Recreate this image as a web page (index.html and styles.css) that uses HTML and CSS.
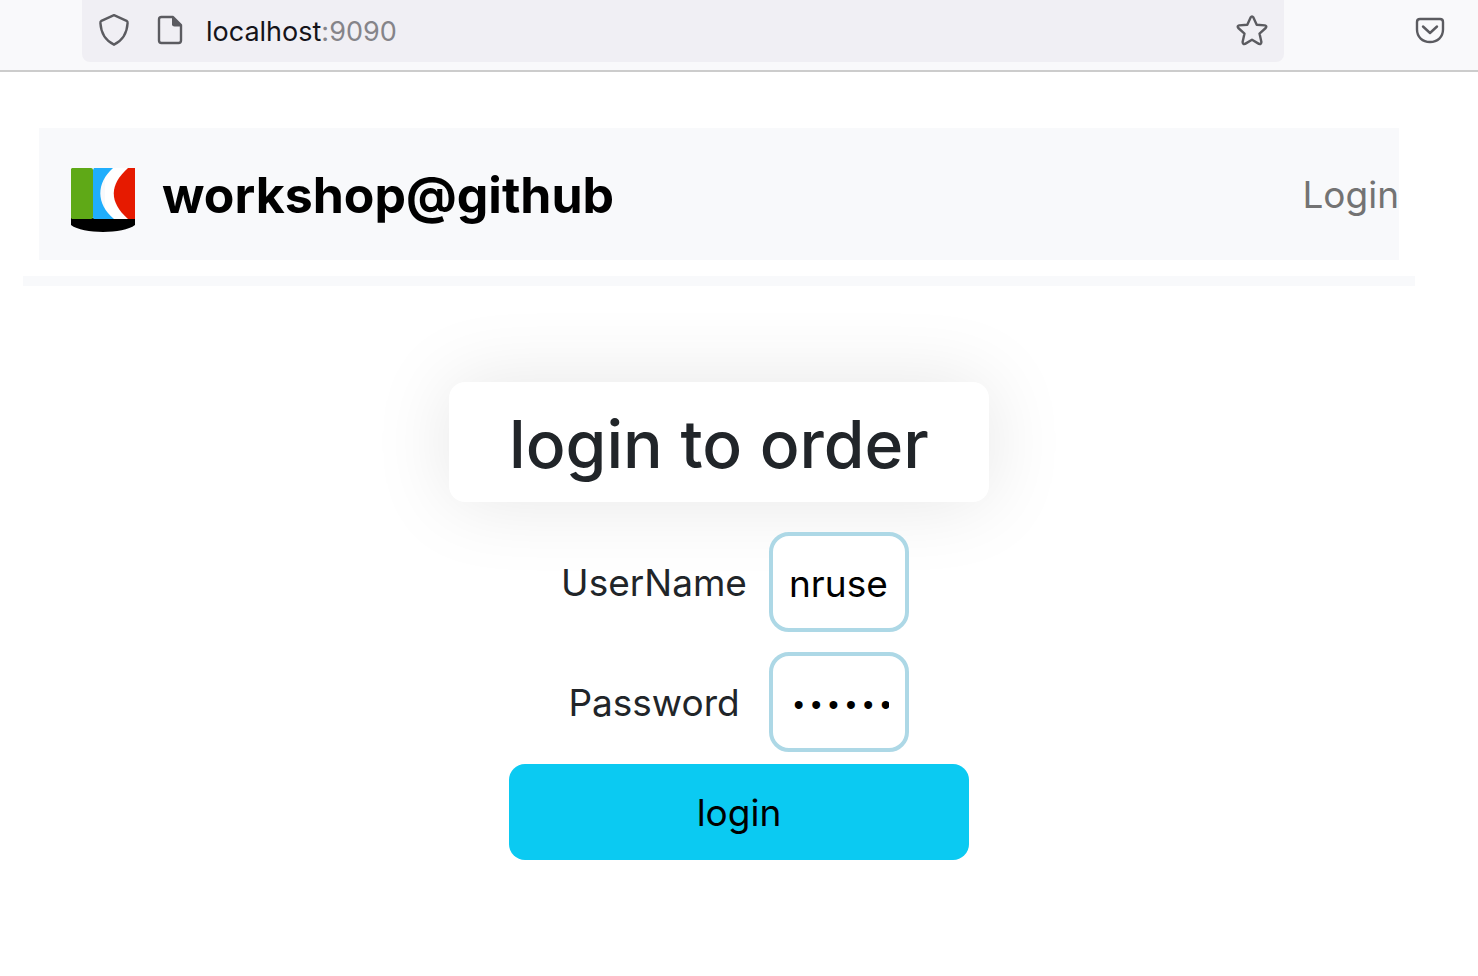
FILE: index.html
```html
<!DOCTYPE html>
<html lang="en">
<head>
<meta charset="utf-8">
<title>workshop@github</title>
<link rel="stylesheet" href="styles.css">
</head>
<body>
<div class="toolbar">
  <div class="address">
    <svg class="icon" viewBox="0 0 32 32" aria-hidden="true"><path d="M16 .200 28.600 5.800Q29.800 6.500 29.600 8C29 18.500 24.500 25.500 16 29.700C7.500 25.500 3 18.500 2.400 8Q2.200 6.500 3.400 5.800Z"/></svg>
    <svg class="icon" viewBox="0 0 32 32" aria-hidden="true"><path d="M7.500 2H19l8 8V25.500Q27 28 24.500 28H7.500Q5 28 5 25.500V4.500Q5 2 7.500 2Z"/><path class="solid" d="M18 2 28 11V11.500H20.500Q18 11.500 18 9.500Z"/></svg>
    <label class="url"><input class="url-input" type="text" aria-label="Address" value=""><span class="url-text">localhost<span class="port">:9090</span></span></label>
    <button class="icon-button" type="button" aria-label="Bookmark this page"><svg class="icon" viewBox="0 0 32 32"><path d="M14.600 2.500Q16 .300 17.400 2.500L20.700 9.700 28.900 10.400Q31.300 11 29.700 13L23.500 18.600 25.400 27Q25.300 29.500 22.900 28.900L16 24.800 9.100 28.900Q6.700 29.500 6.600 27L8.500 18.600 2.300 13Q.700 11 3.100 10.400L11.300 9.700Z"/></svg></button>
  </div>
  <button class="icon-button pocket" type="button" aria-label="Save to Pocket"><svg class="icon" viewBox="0 0 32 32"><path d="M6 5H26Q29 5 29 8V15.500C29 23 23.500 28 16 28S3 23 3 15.500V8Q3 5 6 5ZM9 12.500 16 19 23 12.500"/></svg></button>
</div>
<div class="page">
  <header class="site-header">
    <a class="brand" href="#">
      <svg class="logo" viewBox="0 0 64 64" aria-hidden="true">
        <path fill="#000" d="M0 50H64V57C52 66.300 12 66.300 0 57Z"/>
        <path fill="#fff" d="M34 0H64V51H34Z"/>
        <path fill="#5fa917" d="M1 0H20Q22 0 22 2V49Q22 51 20 51H1L0 50V1Z"/>
        <path fill="#20aefc" d="M23 0H42C25 15 25 36 43 51H23Q22 51 22 49V2Z"/>
        <path fill="#e61a00" d="M57 0H64V51H57C38 34 38 17 57 0Z"/>
      </svg>
      <span>workshop@github</span>
    </a>
    <a class="nav-link" href="#">Login</a>
  </header>
  <div class="divider"></div>
  <main class="login">
    <h1 class="title">login to order</h1>
    <form class="form">
      <div class="fields">
        <label class="field-label" for="user">UserName</label>
        <input class="field" id="user" type="text" value="nruse">
        <label class="field-label" for="pass">Password</label>
        <input class="field password" id="pass" type="password" value="secret99">
      </div>
      <button class="submit" type="button">login</button>
    </form>
  </main>
</div>
</body>
</html>
```
FILE: styles.css
```css
* { box-sizing: border-box; }
body { margin: 0; background: #fff; color: #212529; font-family: Inter, "Liberation Sans", sans-serif; font-size: 37px; line-height: 60px; }
a { text-decoration: none; }
button, input { font: inherit; }
.toolbar { display: flex; align-items: center; height: 72px; padding: 0 32px 10px 82px; background: #f9f9fb; border-bottom: 2px solid #ccc; }
.address { display: flex; flex: 1; align-items: center; gap: 24px; height: 62px; margin-top: 2px; padding: 0 16px; background: #f0eff4; border-radius: 0 0 8px 8px; }
.icon { display: block; width: 32px; height: 32px; overflow: visible; fill: none; stroke: #5b5b60; stroke-width: 2.4; stroke-linejoin: round; stroke-linecap: round; }
.solid { fill: #5b5b60; stroke: none; }
.icon-button { padding: 0; border: 0; background: none; }
.pocket { margin-left: 130px; }
.url { position: relative; flex: 1; margin-left: -4px; padding-top: 2px; font-size: 27px; line-height: 40px; color: #15141a; }
.url-input { position: absolute; inset: 0; width: 100%; border: 0; background: none; outline: 0; }
.url-text { position: relative; pointer-events: none; }
.port { color: #858489; }
.page { padding: 56px 63px 40px 23px; }
.site-header { display: flex; align-items: center; justify-content: space-between; height: 132px; margin: 0 16px 16px; padding: 2px 0 0 32px; background: #f8f9fb; }
.brand { display: flex; align-items: center; gap: 27px; color: #000; font-size: 50px; font-weight: 700; }
.logo { width: 64px; height: 64px; margin-top: 10px; }
.nav-link { color: #737373; }
.divider { height: 10px; background: #f8f9fb; }
.login { width: 540px; max-width: 100%; margin: 96px auto 0; }
.title { margin: 0 0 30px; padding: 22px 20px 18px; border-radius: 16px; background: #fff; box-shadow: 0 0 80px rgba(0, 0, 0, .1); font-size: 66px; font-weight: 500; line-height: 80px; text-align: center; }
.form { margin: 0 20px 0 60px; }
.fields { display: grid; grid-template-columns: 1fr 140px; align-items: center; gap: 20px 0; padding: 0 60px 0 30px; text-align: center; }
.field-label { padding-top: 2px; }
.field { position: relative; width: 100%; height: 100px; padding: 2px 16px 0; border: 4px solid #add8e6; border-radius: 20px; background: #fff; color: #000; outline: 0; }
.password { padding: 10px 16px 0 17px; font-family: "Liberation Mono", monospace; font-size: 29px; }
.submit { display: block; width: 100%; height: 96px; margin-top: 12px; padding-top: 2px; border: 0; border-radius: 16px; background: #0bcaf2; color: #000; }
```
